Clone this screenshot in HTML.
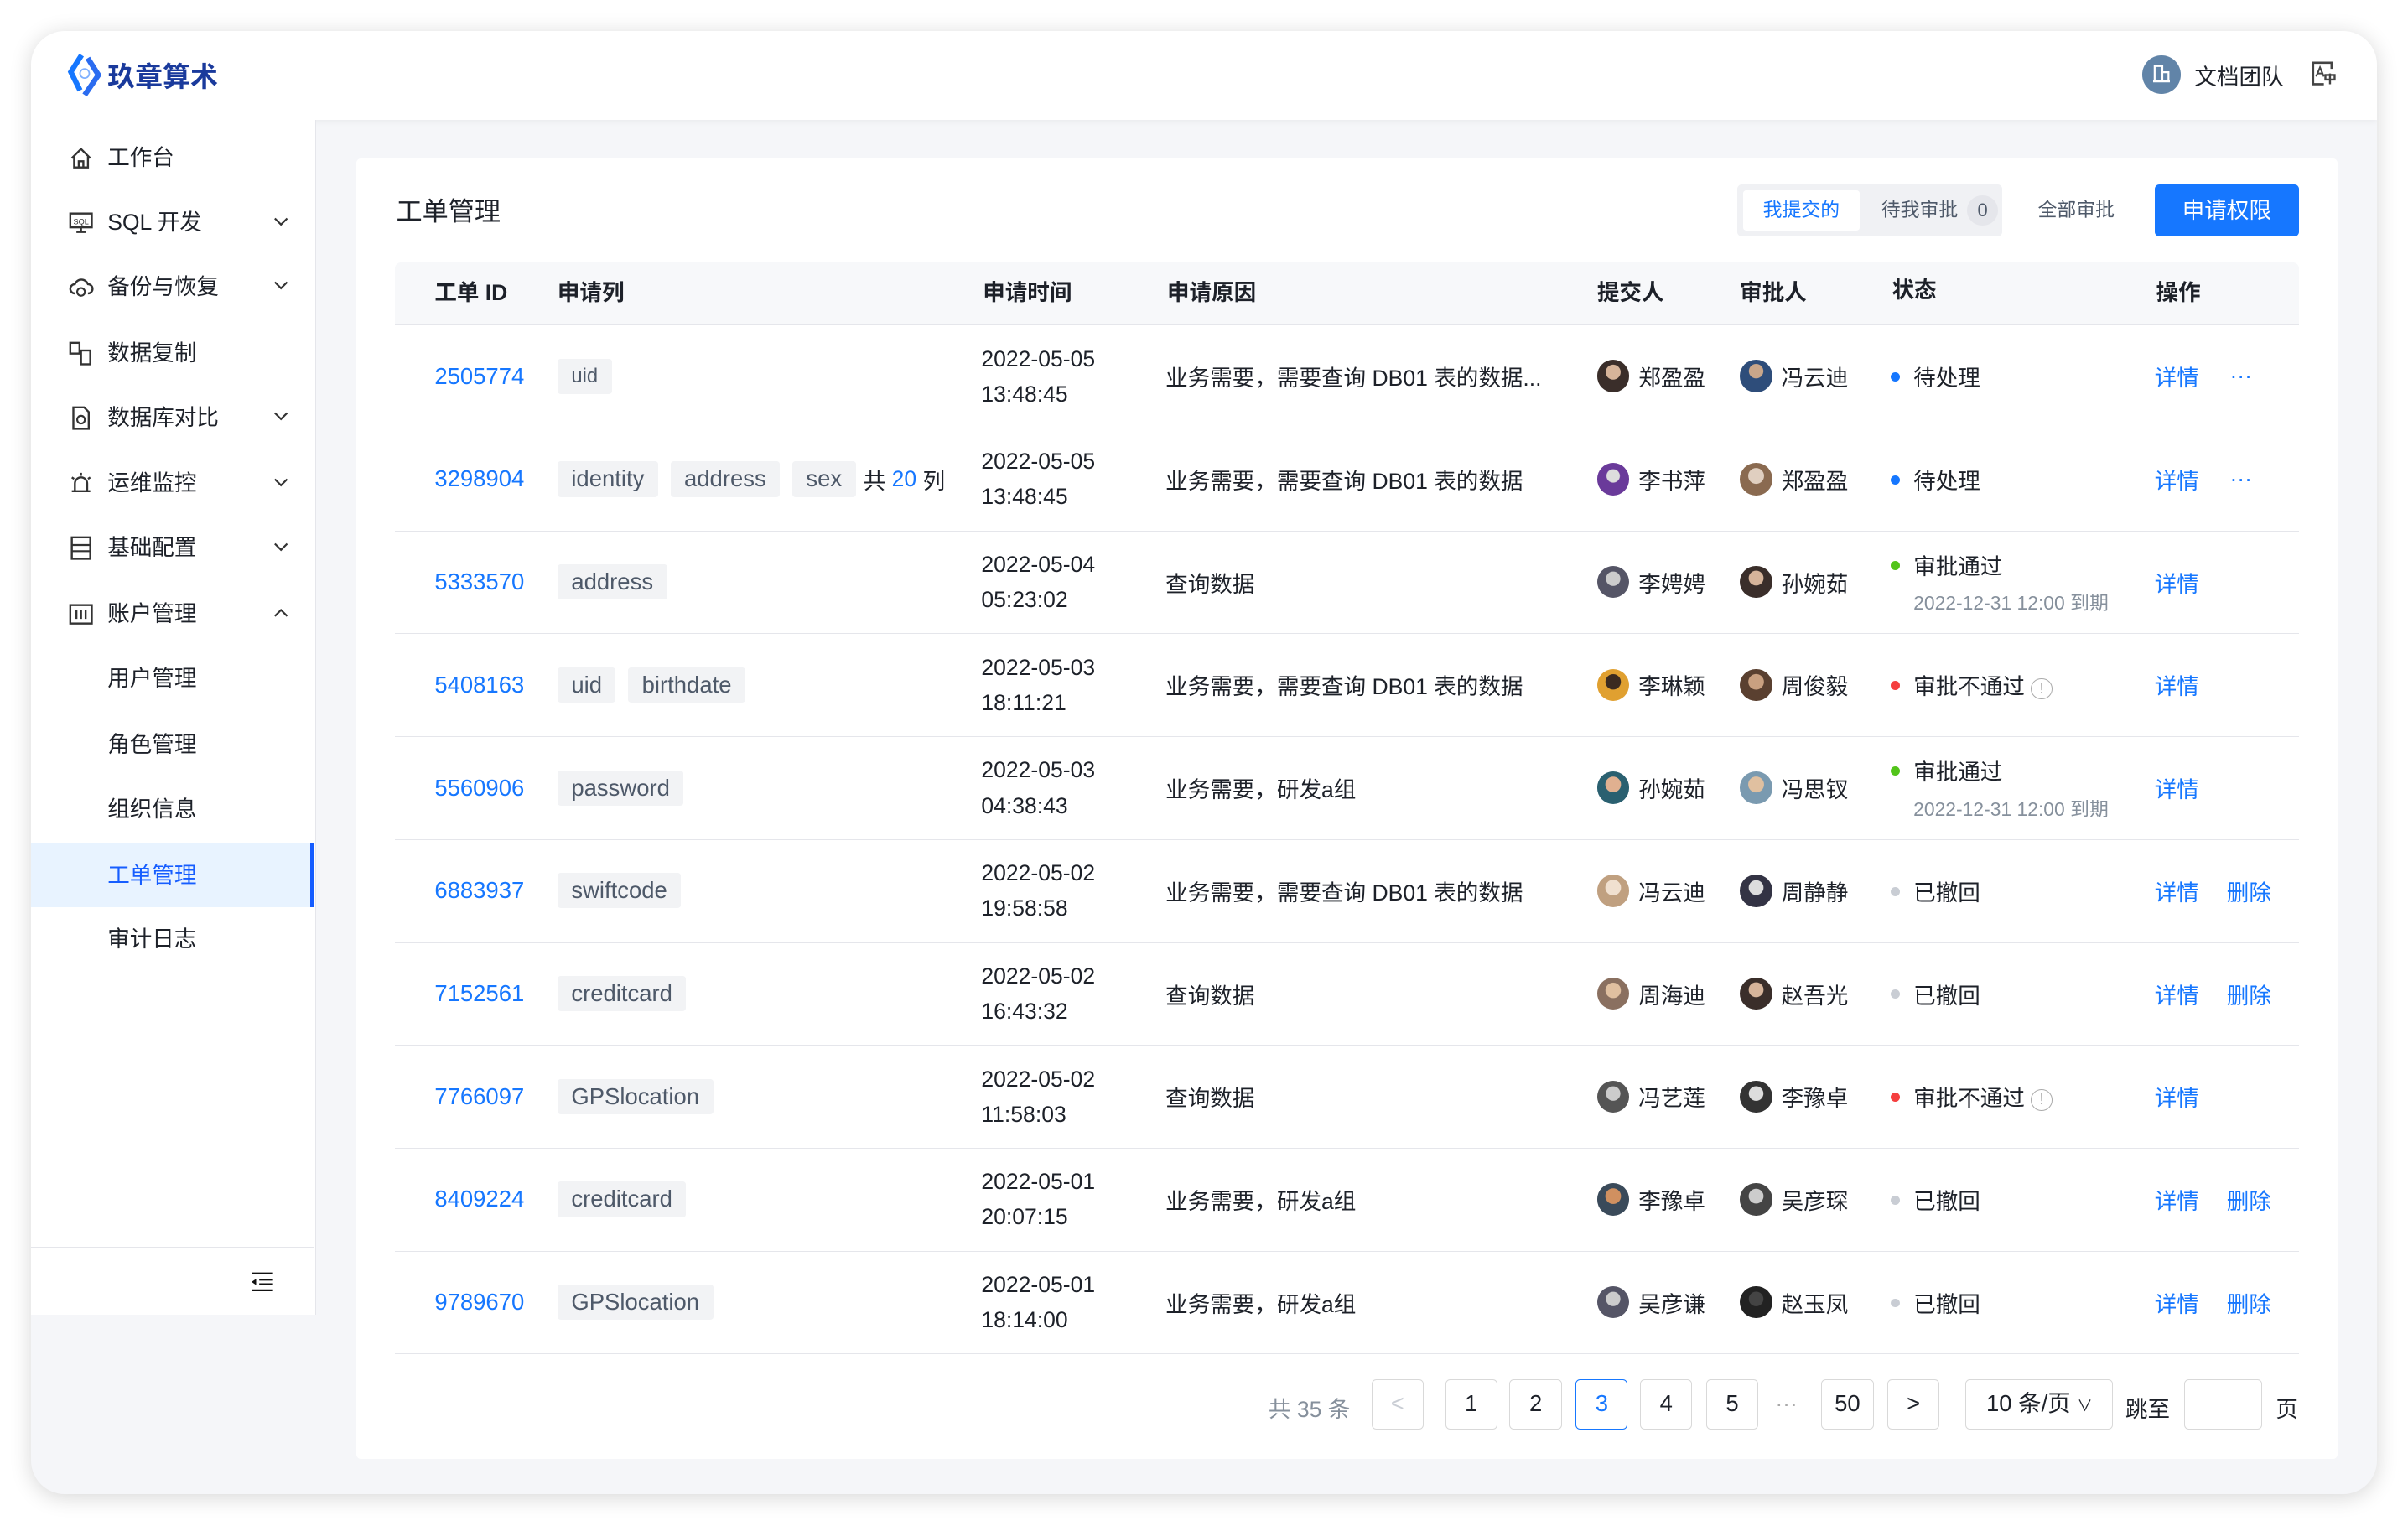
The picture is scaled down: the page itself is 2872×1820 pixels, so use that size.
<!DOCTYPE html>
<html><head><meta charset="utf-8"><style>
*{margin:0;padding:0;box-sizing:border-box}
html,body{width:2872px;height:1820px;overflow:hidden;background:#fff}
#z{zoom:1.8316;width:1568px;height:994px;position:relative;font-family:"Liberation Sans","Noto Sans CJK SC",sans-serif;color:#1d2129;font-size:14.5px}
.a{position:absolute}
.card{left:20px;top:20px;width:1528px;height:953px;border-radius:22px;background:#f5f6f9;overflow:hidden;box-shadow:0 2px 14px rgba(0,0,0,.16)}
.hdr{left:0;top:0;width:1528px;height:58px;background:#fff;box-shadow:0 1px 4px rgba(0,0,0,.05)}
.side{left:0;top:58px;width:186px;height:778px;background:#fff;border-right:1px solid #e5e6eb}
.mi{position:absolute;left:0;width:185px;height:42px;line-height:42px;padding-left:50px;color:#1d2129;font-size:14.5px}
.mi svg.ic{position:absolute;left:25px;top:13px}
.mi .ch{position:absolute;left:158px;top:15px}
.sel{background:#e8f3ff;color:#165dff;border-right:3px solid #165dff}
.panel{left:212px;top:83px;width:1290px;height:847px;background:#fff;border-radius:3px}
.th{position:absolute;top:68px;left:25px;width:1240px;height:41px;background:#f7f8fa;border-radius:4px 4px 0 0;border-bottom:1px solid #e5e6eb;font-weight:bold;font-size:14.5px;line-height:40px}
.row{position:absolute;left:25px;width:1240px;height:67px;border-bottom:1px solid #e5e6eb}
.c{position:absolute;top:0;height:66px;display:flex;align-items:center}
.id{left:26px;color:#1677ff;font-size:15px}
.tag{background:#f2f3f5;border-radius:2px;padding:0 9px;height:23px;line-height:23px;margin-right:8px;color:#4e5969;font-size:15px;display:inline-block}
.tm{left:382px;flex-direction:column;align-items:flex-start;justify-content:center;line-height:23px;font-size:14.5px;color:#1d2129}
.rs{left:502px;color:#1d2129}
.av{width:21px;height:21px;border-radius:50%;display:inline-block;margin-right:6px;background:radial-gradient(circle at 50% 38%,#d6b49a 0 28%,#3a2e2a 30% 100%)}
.st{left:974px;flex-direction:column;align-items:flex-start;justify-content:center}
.dot{width:6px;height:6px;border-radius:50%;display:inline-block;margin-right:9px;vertical-align:middle;position:relative;top:-2px}
.op{left:1146px;color:#1677ff}
.pb{position:absolute;top:795px;width:34px;height:33px;border:1px solid #d9d9d9;border-radius:3px;text-align:center;line-height:31px;font-size:15px;color:#1d2129}
</style></head><body><div id="z">
<div class="a card">
 <div class="a hdr">
  <svg class="a" style="left:23px;top:14px" width="24" height="30" viewBox="0 0 24 30"><path d="M10 2 L3 13 L9 25" stroke="#1677ff" stroke-width="3.5" fill="none"/><path d="M14 4 L21 15 L12 28" stroke="#2b6cf0" stroke-width="3.5" fill="none"/><circle cx="12" cy="14" r="3" fill="none" stroke="#7fb0ff" stroke-width="1"/></svg>
  <div class="a" style="left:50px;top:16px;font-size:18px;font-weight:bold;color:#1a3a9c">玖章算术</div>
  <div class="a" style="left:1375px;top:16px;width:25px;height:25px;border-radius:50%;background:#6184a8"></div>
  <svg class="a" style="left:1382px;top:22px" width="11" height="12"><path d="M1 11V1h5v10M6 5h4v6M0 11h11" stroke="#fff" fill="none" stroke-width="1.2"/></svg>
  <div class="a" style="left:1409px;top:18px;font-size:14.5px;color:#1d2129">文档团队</div>
  <svg class="a" style="left:1485px;top:20px" width="16" height="16" viewBox="0 0 16 16"><path d="M13 5V1H1v14h7" stroke="#444" fill="none" stroke-width="1.4"/><path d="M3 10l2.5-6 2.5 6M4 8h3" stroke="#444" fill="none" stroke-width="1.1"/><path d="M9 9h6v3H9zM12 8v7" stroke="#444" fill="none" stroke-width="1.3"/></svg>
 </div>
 <div class="a side">
  <div class="mi" style="top:4px"><svg class="ic" width="16" height="16"><path d="M2 8L8 2l6 6M3.5 7v7h9V7M6.5 14v-4h3v4" stroke="#333" fill="none" stroke-width="1.3"/></svg>工作台</div>
  <div class="mi" style="top:46px"><svg class="ic" width="16" height="16"><rect x="1" y="2" width="14" height="9" stroke="#333" fill="none" stroke-width="1.3"/><path d="M8 11v3M5 14h6" stroke="#333" stroke-width="1.3"/><text x="3" y="9" font-size="5" font-family="Liberation Sans" fill="#333">SQL</text></svg>SQL 开发<svg class="ch" width="10" height="10"><path d="M1 3l4 4 4-4" stroke="#333" fill="none" stroke-width="1.2"/></svg></div>
  <div class="mi" style="top:88px"><svg class="ic" width="16" height="16"><path d="M4 12a3 3 0 0 1 0-6 4.5 4.5 0 0 1 8.5 0 3 3 0 0 1 0 6" stroke="#333" fill="none" stroke-width="1.3"/><circle cx="8" cy="11" r="2.5" stroke="#333" fill="none" stroke-width="1.2"/></svg>备份与恢复<svg class="ch" width="10" height="10"><path d="M1 3l4 4 4-4" stroke="#333" fill="none" stroke-width="1.2"/></svg></div>
  <div class="mi" style="top:131px"><svg class="ic" width="16" height="16"><rect x="1" y="1" width="6" height="7" stroke="#333" fill="none" stroke-width="1.3"/><rect x="8" y="6" width="6" height="9" stroke="#333" fill="none" stroke-width="1.3"/></svg>数据复制</div>
  <div class="mi" style="top:173px"><svg class="ic" width="16" height="16"><path d="M3 1h7l3 3v11H3z" stroke="#333" fill="none" stroke-width="1.3"/><circle cx="8" cy="9" r="2.5" stroke="#333" fill="none" stroke-width="1.2"/></svg>数据库对比<svg class="ch" width="10" height="10"><path d="M1 3l4 4 4-4" stroke="#333" fill="none" stroke-width="1.2"/></svg></div>
  <div class="mi" style="top:216px"><svg class="ic" width="16" height="16"><path d="M4 13V8a4 4 0 0 1 8 0v5M2 13h12M8 1v2M2 4l1.5 1M14 4l-1.5 1" stroke="#333" fill="none" stroke-width="1.3"/></svg>运维监控<svg class="ch" width="10" height="10"><path d="M1 3l4 4 4-4" stroke="#333" fill="none" stroke-width="1.2"/></svg></div>
  <div class="mi" style="top:258px"><svg class="ic" width="16" height="16"><rect x="2" y="1" width="12" height="14" stroke="#333" fill="none" stroke-width="1.3"/><path d="M2 6h12M2 10h12" stroke="#333" stroke-width="1.2"/></svg>基础配置<svg class="ch" width="10" height="10"><path d="M1 3l4 4 4-4" stroke="#333" fill="none" stroke-width="1.2"/></svg></div>
  <div class="mi" style="top:301px"><svg class="ic" width="16" height="16"><rect x="1" y="2" width="14" height="12" stroke="#333" fill="none" stroke-width="1.3"/><path d="M5 5v6M8 5v6M11 5v6" stroke="#333" stroke-width="1.3"/></svg>账户管理<svg class="ch" width="10" height="10"><path d="M1 7l4-4 4 4" stroke="#333" fill="none" stroke-width="1.2"/></svg></div>
  <div class="mi" style="top:343px">用户管理</div>
  <div class="mi" style="top:386px">角色管理</div>
  <div class="mi" style="top:428px">组织信息</div>
  <div class="mi sel" style="top:471px">工单管理</div>
  <div class="mi" style="top:513px">审计日志</div>
  <div class="a" style="left:0;top:734px;width:185px;border-top:1px solid #e5e6eb"></div>
  <svg class="a" style="left:144px;top:750px" width="15" height="13"><path d="M0 1h14M5 5h9M5 8h9M0 12h14" stroke="#111" stroke-width="1.3"/><path d="M0 6.5L3 4.5v4z" fill="#111"/></svg>
 </div>
 <div class="a panel">
  <div class="a" style="left:26px;top:21px;font-size:17px;color:#1d2129">工单管理</div>
  <div class="a" style="left:899px;top:17px;width:173px;height:34px;background:#f0f1f4;border-radius:3px"></div>
  <div class="a" style="left:903px;top:21px;width:76px;height:26px;background:#fff;border-radius:2px;color:#1677ff;font-size:12.5px;text-align:center;line-height:26px">我提交的</div>
  <div class="a" style="left:993px;top:21px;font-size:12.5px;line-height:26px;color:#4e5969">待我审批</div>
  <div class="a" style="left:1049px;top:24px;width:20px;height:20px;border-radius:10px;background:#e5e6eb;font-size:12px;text-align:center;line-height:20px;color:#4e5969">0</div>
  <div class="a" style="left:1095px;top:21px;font-size:12.5px;line-height:26px;color:#4e5969">全部审批</div>
  <div class="a" style="left:1171px;top:17px;width:94px;height:34px;background:#1677ff;border-radius:3px;color:#fff;font-size:14.5px;text-align:center;line-height:34px">申请权限</div>
  <div class="th"><span class="a" style="left:26px">工单 ID</span><span class="a" style="left:106px">申请列</span><span class="a" style="left:383px">申请时间</span><span class="a" style="left:503px">申请原因</span><span class="a" style="left:783px">提交人</span><span class="a" style="left:876px">审批人</span><span class="a" style="left:975px;top:-2px">状态</span><span class="a" style="left:1147px">操作</span></div>

  <div class="row" style="top:109px"><div class="c id">2505774</div><div class="c" style="left:106px"><span class="tag" style="font-size:13px">uid</span></div><div class="c tm"><span>2022-05-05</span><span>13:48:45</span></div><div class="c rs">业务需要，需要查询 DB01 表的数据...</div><div class="c" style="left:783px"><i class="av"></i>郑盈盈</div><div class="c" style="left:876px"><i class="av" style="background:radial-gradient(circle at 50% 35%,#c9a68a 0 26%,#2e4d7a 28%)"></i>冯云迪</div><div class="c st"><span><i class="dot" style="background:#1677ff"></i>待处理</span></div><div class="c op">详情<span style="margin-left:20px">···</span></div></div>
  <div class="row" style="top:176px"><div class="c id">3298904</div><div class="c" style="left:106px"><span class="tag">identity</span><span class="tag">address</span><span class="tag" style="margin-right:5px">sex</span>共&nbsp;<span style="color:#1677ff">20</span>&nbsp;列</div><div class="c tm"><span>2022-05-05</span><span>13:48:45</span></div><div class="c rs">业务需要，需要查询 DB01 表的数据</div><div class="c" style="left:783px"><i class="av" style="background:radial-gradient(circle at 50% 40%,#ddd 0 25%,#6a3a9a 28%)"></i>李书萍</div><div class="c" style="left:876px"><i class="av" style="background:radial-gradient(circle at 50% 40%,#e0cfc0 0 30%,#8a6a50 32%)"></i>郑盈盈</div><div class="c st"><span><i class="dot" style="background:#1677ff"></i>待处理</span></div><div class="c op">详情<span style="margin-left:20px">···</span></div></div>
  <div class="row" style="top:243px"><div class="c id">5333570</div><div class="c" style="left:106px"><span class="tag">address</span></div><div class="c tm"><span>2022-05-04</span><span>05:23:02</span></div><div class="c rs">查询数据</div><div class="c" style="left:783px"><i class="av" style="background:radial-gradient(circle at 50% 40%,#ccc 0 28%,#556 30%)"></i>李娉娉</div><div class="c" style="left:876px"><i class="av"></i>孙婉茹</div><div class="c st"><span><i class="dot" style="background:#52c41a"></i>审批通过</span><span style="font-size:12.5px;color:#86909c;margin-top:4px;margin-left:15px">2022-12-31 12:00 到期</span></div><div class="c op">详情</div></div>
  <div class="row" style="top:310px"><div class="c id">5408163</div><div class="c" style="left:106px"><span class="tag">uid</span><span class="tag">birthdate</span></div><div class="c tm"><span>2022-05-03</span><span>18:11:21</span></div><div class="c rs">业务需要，需要查询 DB01 表的数据</div><div class="c" style="left:783px"><i class="av" style="background:radial-gradient(circle at 50% 40%,#3a2a20 0 30%,#e0a030 32%)"></i>李琳颖</div><div class="c" style="left:876px"><i class="av" style="background:radial-gradient(circle at 50% 40%,#c9a080 0 30%,#5a4030 32%)"></i>周俊毅</div><div class="c st"><span><i class="dot" style="background:#f53f3f"></i>审批不通过 <span style="display:inline-block;width:14px;height:14px;border:1px solid #aaa;border-radius:50%;font-size:10px;text-align:center;line-height:12px;color:#aaa;vertical-align:middle">!</span></span></div><div class="c op">详情</div></div>
  <div class="row" style="top:377px"><div class="c id">5560906</div><div class="c" style="left:106px"><span class="tag">password</span></div><div class="c tm"><span>2022-05-03</span><span>04:38:43</span></div><div class="c rs">业务需要，研发a组</div><div class="c" style="left:783px"><i class="av" style="background:radial-gradient(circle at 50% 40%,#e0b090 0 30%,#2a6070 32%)"></i>孙婉茹</div><div class="c" style="left:876px"><i class="av" style="background:radial-gradient(circle at 50% 40%,#e0c0a0 0 30%,#7a9ab0 32%)"></i>冯思钗</div><div class="c st"><span><i class="dot" style="background:#52c41a"></i>审批通过</span><span style="font-size:12.5px;color:#86909c;margin-top:4px;margin-left:15px">2022-12-31 12:00 到期</span></div><div class="c op">详情</div></div>
  <div class="row" style="top:444px"><div class="c id">6883937</div><div class="c" style="left:106px"><span class="tag">swiftcode</span></div><div class="c tm"><span>2022-05-02</span><span>19:58:58</span></div><div class="c rs">业务需要，需要查询 DB01 表的数据</div><div class="c" style="left:783px"><i class="av" style="background:radial-gradient(circle at 50% 40%,#f0e0d0 0 30%,#c0a080 32%)"></i>冯云迪</div><div class="c" style="left:876px"><i class="av" style="background:radial-gradient(circle at 50% 40%,#ddd 0 28%,#334 30%)"></i>周静静</div><div class="c st"><span><i class="dot" style="background:#c9cdd4"></i>已撤回</span></div><div class="c op">详情<span style="margin-left:18px">删除</span></div></div>
  <div class="row" style="top:511px"><div class="c id">7152561</div><div class="c" style="left:106px"><span class="tag">creditcard</span></div><div class="c tm"><span>2022-05-02</span><span>16:43:32</span></div><div class="c rs">查询数据</div><div class="c" style="left:783px"><i class="av" style="background:radial-gradient(circle at 50% 40%,#e0c0a0 0 30%,#8a7060 32%)"></i>周海迪</div><div class="c" style="left:876px"><i class="av"></i>赵吾光</div><div class="c st"><span><i class="dot" style="background:#c9cdd4"></i>已撤回</span></div><div class="c op">详情<span style="margin-left:18px">删除</span></div></div>
  <div class="row" style="top:578px"><div class="c id">7766097</div><div class="c" style="left:106px"><span class="tag">GPSlocation</span></div><div class="c tm"><span>2022-05-02</span><span>11:58:03</span></div><div class="c rs">查询数据</div><div class="c" style="left:783px"><i class="av" style="background:radial-gradient(circle at 50% 40%,#ccc 0 28%,#555 30%)"></i>冯艺莲</div><div class="c" style="left:876px"><i class="av" style="background:radial-gradient(circle at 50% 40%,#ddd 0 28%,#333 30%)"></i>李豫卓</div><div class="c st"><span><i class="dot" style="background:#f53f3f"></i>审批不通过 <span style="display:inline-block;width:14px;height:14px;border:1px solid #aaa;border-radius:50%;font-size:10px;text-align:center;line-height:12px;color:#aaa;vertical-align:middle">!</span></span></div><div class="c op">详情</div></div>
  <div class="row" style="top:645px"><div class="c id">8409224</div><div class="c" style="left:106px"><span class="tag">creditcard</span></div><div class="c tm"><span>2022-05-01</span><span>20:07:15</span></div><div class="c rs">业务需要，研发a组</div><div class="c" style="left:783px"><i class="av" style="background:radial-gradient(circle at 50% 40%,#d09060 0 30%,#3a4a5a 32%)"></i>李豫卓</div><div class="c" style="left:876px"><i class="av" style="background:radial-gradient(circle at 50% 40%,#ccc 0 28%,#444 30%)"></i>吴彦琛</div><div class="c st"><span><i class="dot" style="background:#c9cdd4"></i>已撤回</span></div><div class="c op">详情<span style="margin-left:18px">删除</span></div></div>
  <div class="row" style="top:712px"><div class="c id">9789670</div><div class="c" style="left:106px"><span class="tag">GPSlocation</span></div><div class="c tm"><span>2022-05-01</span><span>18:14:00</span></div><div class="c rs">业务需要，研发a组</div><div class="c" style="left:783px"><i class="av" style="background:radial-gradient(circle at 50% 40%,#ccc 0 28%,#556 30%)"></i>吴彦谦</div><div class="c" style="left:876px"><i class="av" style="background:radial-gradient(circle at 50% 40%,#444 0 28%,#222 30%)"></i>赵玉凤</div><div class="c st"><span><i class="dot" style="background:#c9cdd4"></i>已撤回</span></div><div class="c op">详情<span style="margin-left:18px">删除</span></div></div>

  <div class="a" style="left:594px;top:803px;color:#86909c;font-size:14.5px">共 35 条</div>
  <div class="pb" style="left:661px;color:#c9cdd4">&lt;</div>
  <div class="pb" style="left:709px">1</div>
  <div class="pb" style="left:751px">2</div>
  <div class="pb" style="left:794px;border-color:#1677ff;color:#1677ff">3</div>
  <div class="pb" style="left:836px">4</div>
  <div class="pb" style="left:879px">5</div>
  <div class="a" style="left:924px;top:803px;color:#aaa">···</div>
  <div class="pb" style="left:954px">50</div>
  <div class="pb" style="left:997px">&gt;</div>
  <div class="pb" style="left:1048px;width:96px">10 条/页 <span style="font-size:10px">∨</span></div>
  <div class="a" style="left:1152px;top:803px">跳至</div>
  <div class="pb" style="left:1190px;width:51px"></div>
  <div class="a" style="left:1250px;top:803px">页</div>
 </div>
</div>
</div></body></html>
